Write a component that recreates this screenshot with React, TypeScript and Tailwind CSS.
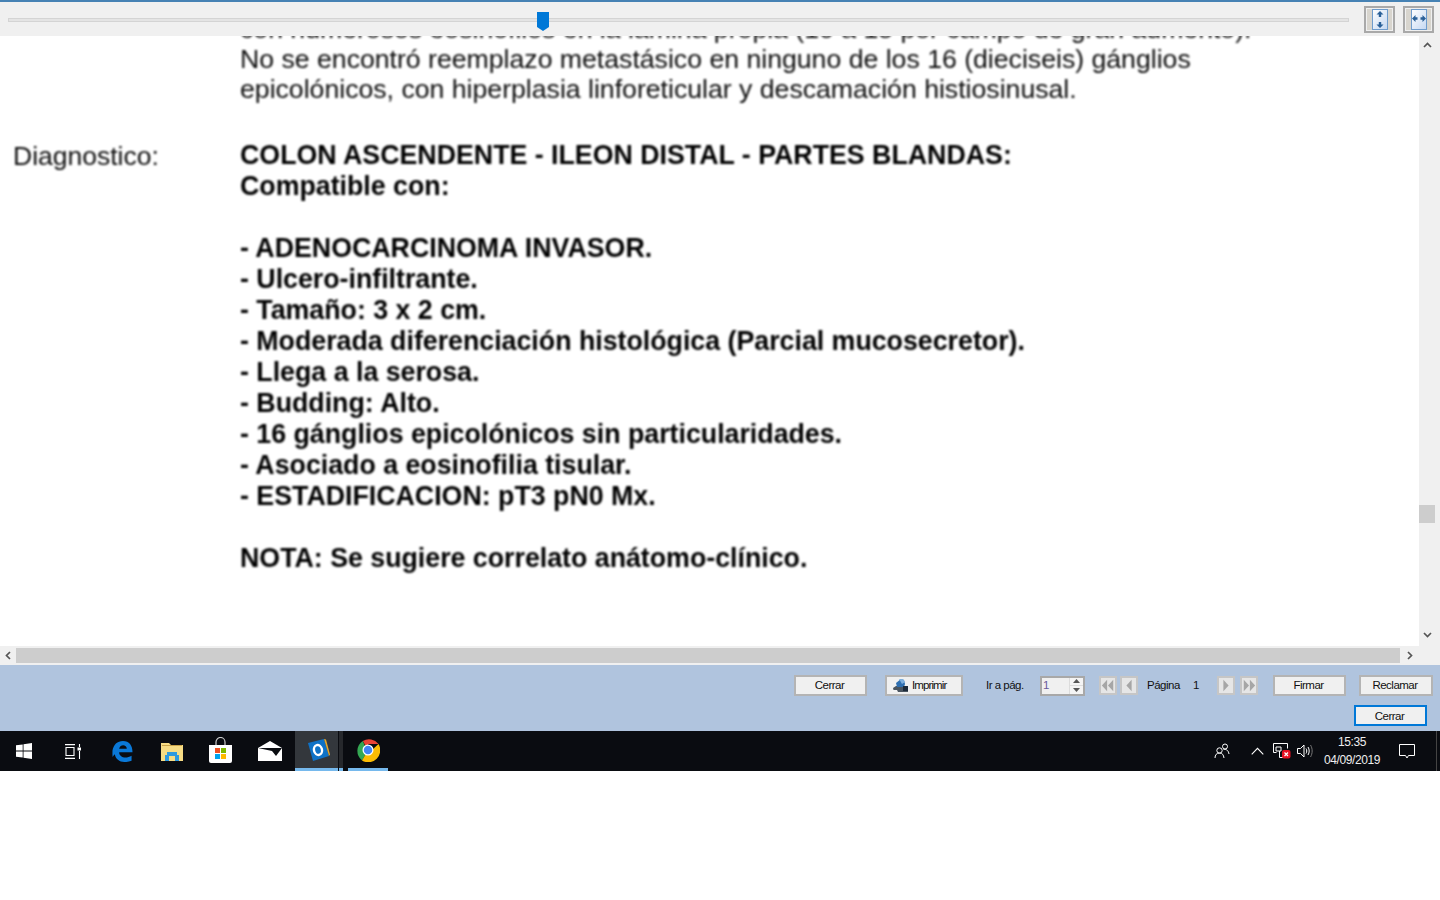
import React from "react";

const bold = [
  "COLON ASCENDENTE - ILEON DISTAL - PARTES BLANDAS:",
  "Compatible con:",
  "\u00a0",
  "- ADENOCARCINOMA INVASOR.",
  "- Ulcero-infiltrante.",
  "- Tamaño: 3 x 2 cm.",
  "- Moderada diferenciación histológica (Parcial mucosecretor).",
  "- Llega a la serosa.",
  "- Budding: Alto.",
  "- 16 gánglios epicolónicos sin particularidades.",
  "- Asociado a eosinofilia tisular.",
  "- ESTADIFICACION: pT3 pN0 Mx.",
  "\u00a0",
  "NOTA: Se sugiere correlato anátomo-clínico.",
];

function FitButton({ vertical }: { vertical?: boolean }) {
  return (
    <div className="w-[31px] h-[27px] border-2 border-[#a9a9a9] bg-[#f0f0f0] p-px">
      <div className="w-full h-full bg-[#d8d5ce] flex items-center justify-center">
        <svg width="16" height="21" viewBox="0 0 16 21">
          <defs>
            <linearGradient id={vertical ? "g1" : "g2"} x1="0" y1="0" x2="1" y2="1">
              <stop offset="0" stopColor="#ffffff" />
              <stop offset="1" stopColor="#c4d8f2" />
            </linearGradient>
          </defs>
          <rect x="0.5" y="0.5" width="15" height="20" fill={`url(#${vertical ? "g1" : "g2"})`} stroke="#6f9ccc" />
          {vertical ? (
            <path d="M8 2l3.500 3.500H9.200V8H6.800V5.500H4.500zM8 19l3.500-3.500H9.200V13H6.800v2.500H4.500z" fill="#2a6098" />
          ) : (
            <path d="M1 9.500l3.500-3.500v2.300h2v2.400h-2V13zM15 9.500L11.500 6v2.300h-2v2.400h2V13z" fill="#2a6098" />
          )}
        </svg>
      </div>
    </div>
  );
}

function Chevron({ d }: { d: string }) {
  return (
    <svg width="9" height="9" viewBox="0 0 9 9" fill="none" stroke="#555" strokeWidth="1.7">
      <path d={d} />
    </svg>
  );
}

function WinButton({ w, label, icon, strong }: { w: string; label: string; icon?: React.ReactNode; strong?: boolean }) {
  return (
    <div
      className={`${w} ${strong ? "border-[#0078d7]" : "border-[#b4b4b4]"} ${icon ? "justify-start pl-[5px] gap-[3px] tracking-[-0.9px]" : "justify-center pr-[2px] tracking-[-0.5px]"} h-[21px] border-2 bg-[#f0f0f0] flex items-center text-[11.5px] text-[#111]`}
    >
      {icon}
      <span className={strong ? "pt-[2px]" : "pt-px"}>{label}</span>
    </div>
  );
}

function NavButton({ kind }: { kind: "first" | "prev" | "next" | "last" }) {
  const paths = {
    first: "M7 2L1 8.500l6 6.500zM14 2L8 8.500l6 6.500z",
    prev: "M11 2L5 8.500l6 6.500z",
    next: "M5 2l6 6.500L5 15z",
    last: "M2 2l6 6.500L2 15zM9 2l6 6.500L9 15z",
  };
  return (
    <div className="w-[18px] h-[19px] bg-[#e6e6e6] border-2 border-[#c6c6c6] flex items-center justify-center">
      <svg width="14" height="15" viewBox="0 0 16 17">
        <path d={paths[kind]} fill="#a6a6a6" />
      </svg>
    </div>
  );
}

function TaskSlot({ w, children, className = "" }: { w: string; children: React.ReactNode; className?: string }) {
  return <div className={`${w} h-10 flex items-center justify-center shrink-0 ${className}`}>{children}</div>;
}

export default function App() {
  return (
    <div className="w-[1440px] h-[900px] bg-white overflow-hidden font-['Liberation_Sans',Arial,sans-serif]">
      <div className="h-[771px] flex flex-col">
        {/* top zoom bar */}
        <div className="h-9 shrink-0 border-t-2 border-[#4682b4] bg-[#f0f0f0] flex items-center pl-2 pr-[6px] gap-[15px]">
          <div className="relative flex-1 h-[4px] bg-[#e4e4e4] border border-[#d4d4d4] mt-[2px]">
            <svg className="absolute left-[528px] top-[-7px]" width="12" height="19" viewBox="0 0 12 19">
              <path d="M0 0h12v15l-6 4-6-4z" fill="#0078d7" />
            </svg>
          </div>
          <div className="flex gap-2 shrink-0">
            <FitButton vertical />
            <FitButton />
          </div>
        </div>

        {/* document */}
        <div className="flex h-[629px] shrink-0">
          <div className="flex-1 flex flex-col min-w-0">
            <div className="h-[610px] overflow-hidden bg-white pl-[13px]">
              <div className="blur-[0.8px] text-black mt-[-22px] flex">
                <div className="w-[227px] shrink-0 pt-[127px] text-[26.5px] leading-[31px] text-[#0c0c0c]">Diagnostico:</div>
                <div className="whitespace-nowrap">
                  <div className="text-[26.65px] leading-[30px] text-[#0c0c0c]">
                    <div>con numerosos eosinófilos en la lámina propia (10 a 15 por campo de gran aumento).</div>
                    <div>No se encontró reemplazo metastásico en ninguno de los 16 (dieciseis) gánglios</div>
                    <div>epicolónicos, con hiperplasia linforeticular y descamación histiosinusal.</div>
                  </div>
                  <div className="mt-[36px] text-[26.75px] leading-[31px] font-bold">
                    {bold.map((t, i) => (
                      <div key={i}>{t}</div>
                    ))}
                  </div>
                </div>
              </div>
            </div>
            <div className="h-[19px] bg-[#f0f0f0] flex items-center shrink-0">
              <div className="w-4 flex justify-center"><Chevron d="M6 1L2.500 4.500L6 8" /></div>
              <div className="flex-1 h-[15px] bg-[#cdcdcd] mb-[1px]" />
              <div className="w-[19px] flex justify-center"><Chevron d="M3 1l3.500 3.500L3 8" /></div>
            </div>
          </div>
          <div className="w-[21px] shrink-0 bg-[#f0f0f0] flex flex-col pr-[5px]">
            <div className="h-[18px] flex items-center justify-center"><Chevron d="M1 6l3.500-3.500L8 6" /></div>
            <div className="flex-1 pt-[451px]">
              <div className="h-[18px] bg-[#cdcdcd]" />
            </div>
            <div className="h-[35px] flex justify-center"><Chevron d="M1 3l3.500 3.500L8 3" /></div>
          </div>
        </div>

        {/* button panel */}
        <div className="h-[66px] shrink-0 bg-[#b0c4de] flex flex-col items-end pt-[10px] pr-[7px]">
          <div className="flex items-center h-[21px] text-[11.5px] tracking-[-0.5px] text-[#111]">
            <WinButton w="w-[73px]" label="Cerrar" />
            <div className="ml-[18px]">
              <WinButton
                w="w-[78px]"
                label="Imprimir"
                icon={
                  <svg width="17" height="15" viewBox="0 0 17 15">
                    <path d="M1 10l3-2h9l3 2v4H2z" fill="#4a5560" />
                    <path d="M0 12h5l1 2H0z" fill="#f2f2f2" />
                    <path d="M4 5l5-4 3 1 1 4-1 3H5z" fill="#2f6fb0" />
                    <path d="M7 1h4l2 3-3 2z" fill="#7fb0de" />
                    <path d="M11 8h5v5h-5z" fill="#1c2a3a" />
                  </svg>
                }
              />
            </div>
            <span className="ml-[23px] w-[54px] pt-px">Ir a pág.</span>
            <div className="w-[45px] h-[20px] bg-[#f0f0f0] border-2 border-[#a8a8a8] flex justify-between pl-[1px] leading-[14px]">
              <span className="text-[#6a5a9a]">1</span>
              <div className="w-[14px] flex flex-col items-center bg-[#f4f4f4] border-l border-[#dcdcdc]">
                <div className="h-[8px] w-full flex items-center justify-center border-b border-[#dcdcdc]">
                  <svg width="7" height="4" viewBox="0 0 7 4"><path d="M3.500 0L7 4H0z" fill="#555" /></svg>
                </div>
                <div className="h-[8px] w-full flex items-center justify-center">
                  <svg width="7" height="4" viewBox="0 0 7 4"><path d="M3.500 4L7 0H0z" fill="#555" /></svg>
                </div>
              </div>
            </div>
            <div className="ml-[14px] flex gap-[3px]">
              <NavButton kind="first" />
              <NavButton kind="prev" />
            </div>
            <span className="ml-[9px] w-[46px] pt-px">Página</span>
            <span className="w-[24px] pt-px">1</span>
            <div className="flex gap-[5px]">
              <NavButton kind="next" />
              <NavButton kind="last" />
            </div>
            <div className="ml-[15px]"><WinButton w="w-[73px]" label="Firmar" /></div>
            <div className="ml-[13px]"><WinButton w="w-[74px]" label="Reclamar" /></div>
          </div>
          <div className="mt-[9px] mr-[6px]">
            <WinButton w="w-[73px]" label="Cerrar" strong />
          </div>
        </div>

        {/* taskbar */}
        <div className="h-10 shrink-0 bg-[#0a0c11] flex items-center text-white">
          <TaskSlot w="w-[48px]">
            <svg width="16" height="16" viewBox="0 0 16 16" fill="#fff">
              <path d="M0 2.300l6.700-.9v6.200H0zM7.500 1.200L16 0v7.600H7.500zM0 8.400h6.700v6.200L0 13.700zM7.500 8.400H16V16l-8.500-1.200z" />
            </svg>
          </TaskSlot>
          <TaskSlot w="w-[49px]">
            <svg width="16" height="15" viewBox="0 0 16 15" fill="none" stroke="#fff" strokeWidth="1.100">
              <path d="M0 .600h10M0 14.400h10M1 3.500h8v8H1zM14.500 0v3M14.500 7v8" />
              <rect x="12.500" y="3.500" width="3.500" height="3" fill="#fff" stroke="none" />
            </svg>
          </TaskSlot>
          <TaskSlot w="w-[51px]">
            <svg width="21" height="21" viewBox="0 0 21 22">
              <path
                d="M0 10C1 4 5 0 11 0c6.500 0 10 4.500 10 11.800H7c0 5 6.500 7.500 13 3.700v5.300c-8 3-16.500 .5-17.500-7-1 .7-1.700 1.800-2.300 3C-.2 15 0 12 0 10zM7 8h8c0-4.500-7-5-8 0z"
                fill="#0a78d7"
              />
            </svg>
          </TaskSlot>
          <TaskSlot w="w-[48px]">
            <svg width="22" height="19" viewBox="0 0 22 19">
              <path d="M0 1h8l2 2h12v16H0z" fill="#f7dc85" />
              <path d="M1 3h20v1H1z" fill="#c9a248" />
              <path d="M6 10h10v3h2v6h-4v-5H8v5H4v-6h2z" fill="#2d9ae0" />
            </svg>
          </TaskSlot>
          <TaskSlot w="w-[48px]">
            <svg width="23" height="26" viewBox="0 0 23 26" className="mb-[2px]">
              <path d="M7 8V5a4.500 4.500 0 0 1 9 0v3" fill="none" stroke="#ccc" strokeWidth="1.200" />
              <path d="M0 8h23v16a2 2 0 0 1-2 2H2a2 2 0 0 1-2-2z" fill="#fff" />
              <rect x="6" y="11" width="5" height="5" fill="#f25022" />
              <rect x="12" y="11" width="5" height="5" fill="#7fba00" />
              <rect x="6" y="17" width="5" height="5" fill="#00a4ef" />
              <rect x="12" y="17" width="5" height="5" fill="#ffb900" />
            </svg>
          </TaskSlot>
          <TaskSlot w="w-[51px]">
            <svg width="24" height="20" viewBox="0 0 24 20">
              <path d="M0 7l12-7 12 7v13H0z" fill="#fff" />
              <path d="M0 7h24l-6 8-4-5z" fill="#0a0c11" />
            </svg>
          </TaskSlot>
          <div className="w-[48px] h-10 shrink-0 flex">
            <div className="flex-1 bg-[#33373c] border-b-[3px] border-[#76b9ed] flex items-center justify-center pl-[5px]">
              <svg width="24" height="24" viewBox="0 0 24 24">
                <path d="M1 5l16-4 5 17-16 5z" fill="#0f72c6" />
                <path d="M17 1l2 .5 4 15-1 1.500z" fill="#e3a62d" />
                <ellipse cx="11" cy="12" rx="4" ry="5" fill="none" stroke="#fff" strokeWidth="2.400" transform="rotate(-14 11 12)" />
              </svg>
            </div>
            <div className="w-[4px] bg-[#26282c] border-b-[3px] border-[#76b9ed] ml-px" />
          </div>
          <TaskSlot w="w-[40px]" className="ml-[5px] border-b-[3px] border-[#76b9ed]">
            <svg width="24" height="24" viewBox="0 0 48 48">
              <path d="M24 24L13.600 6A24 24 0 0 1 45 12H24z" fill="#ea4335" />
              <path d="M13.600 6A24 24 0 0 0 12 45l10.400-18z" fill="#34a853" />
              <path d="M45 12A24 24 0 0 1 12 45l10.400-18L32 24z" fill="#fbbc05" />
              <circle cx="24" cy="24" r="11" fill="#fff" />
              <circle cx="24" cy="24" r="8.500" fill="#4285f4" />
            </svg>
          </TaskSlot>

          <div className="flex-1" />

          <TaskSlot w="w-[18px]">
            <svg width="16" height="16" viewBox="0 0 16 16" fill="none" stroke="#fff" strokeWidth="1">
              <circle cx="5.500" cy="7.500" r="2.700" />
              <path d="M1 15c0-3 1.500-5 4.500-5s4 2 4.500 5" />
              <circle cx="11" cy="3.500" r="2.500" />
              <path d="M9.500 6.500C13 6 14.500 8 15 11" />
            </svg>
          </TaskSlot>
          <TaskSlot w="w-[16px]" className="ml-[18px]">
            <svg width="13" height="8" viewBox="0 0 13 8" fill="none" stroke="#fff" strokeWidth="1.100">
              <path d="M.700 7.300L6.500 1.300l5.800 6" />
            </svg>
          </TaskSlot>
          <TaskSlot w="w-[18px]" className="ml-[8px]">
            <svg width="18" height="16" viewBox="0 0 18 16" fill="none" stroke="#fff" strokeWidth="1">
              <path d="M.500.500h14M.500.500v9h3M3 4h5v4H3zM14.500.500v5M6.500 8v6.500M6.500 14.500h4" />
              <rect x="9" y="7" width="8.500" height="8.500" rx="2" fill="#e81123" stroke="none" />
              <path d="M11.500 9.500l3.500 3.500M15 9.500L11.500 13" stroke="#fff" strokeWidth="1.200" />
            </svg>
          </TaskSlot>
          <TaskSlot w="w-[16px]" className="ml-[6px]">
            <svg width="16" height="14" viewBox="0 0 16 14" fill="none" stroke="#fff" strokeWidth="1">
              <path d="M.500 4.500h3L7 1v12L3.500 9.500h-3z" />
              <path d="M9 4.500c1 1.500 1 3.500 0 5M11 3c1.600 2.500 1.600 5.500 0 8" />
              <path d="M13.500 1c2.200 3.500 2.200 8.500 0 12" stroke="#777" />
            </svg>
          </TaskSlot>
          <div className="w-[70px] ml-[4px] text-center text-[12px] leading-[18px] tracking-[-0.4px] text-[#eee]">
            <div>15:35</div>
            <div>04/09/2019</div>
          </div>
          <TaskSlot w="w-[18px]" className="ml-[11px]">
            <svg width="16" height="15" viewBox="0 0 16 15" fill="none" stroke="#fff" strokeWidth="1">
              <path d="M.500.500h15v11H9.500l-1.500 2.500-1.500-2.500h-6z" />
            </svg>
          </TaskSlot>
          <div className="ml-[20px] mr-[3px] w-px h-10 bg-[#444]" />
        </div>
      </div>
    </div>
  );
}
